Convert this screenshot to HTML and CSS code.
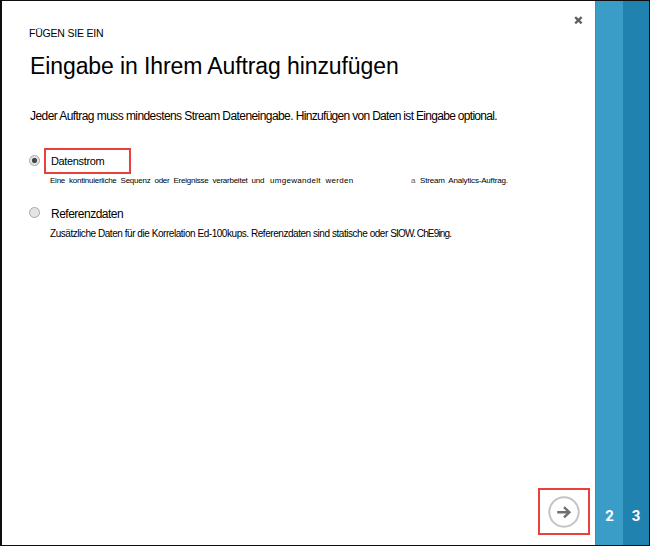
FILE: index.html
```html
<!DOCTYPE html>
<html lang="de">
<head>
<meta charset="utf-8">
<title>Eingabe hinzufügen</title>
<link rel="stylesheet" href="styles.css">
</head>
<body>
<div class="dialog">
  <main class="content">
    <button class="close" aria-label="Schließen"><svg width="9" height="9" viewBox="0 0 9 9"><path d="M1.2 1.2 7.6 7.4M7.6 1.2 1.2 7.4"/></svg></button>
    <p class="eyebrow">FÜGEN SIE EIN</p>
    <h1 class="title">Eingabe in Ihrem Auftrag hinzufügen</h1>
    <p class="intro">Jeder Auftrag muss mindestens Stream Dateneingabe. <span class="intro-end">Hinzufügen von Daten ist Eingabe optional.</span></p>
    <div class="option">
      <span class="radio checked"></span>
      <div class="option-text">
        <div class="label framed">Datenstrom</div>
        <p class="hint hint-small"><span class="lead">Eine kontinuierliche Sequenz oder Ereignisse verarbeitet und</span><span class="wide">umgewandelt werden</span><span class="letter">a</span><span class="tail">Stream Analytics-Auftrag.</span></p>
      </div>
    </div>
    <div class="option second">
      <span class="radio"></span>
      <div class="option-text">
        <div class="label large">Referenzdaten</div>
        <p class="hint"><span>Zusätzliche Daten für die Korrelation Ed-100kups. Referenzdaten sind statische oder</span> <span class="tight">SIOW. ChE9ing.</span></p>
      </div>
    </div>
    <button class="next" aria-label="Weiter"><svg width="32" height="32" viewBox="0 0 32 32"><circle cx="16" cy="16" r="14.7"/><path d="M9.2 16.3H21.4M16 11.2l5.4 5.1-5.4 5.1"/></svg></button>
  </main>
  <aside class="step step-two">2</aside>
  <aside class="step step-three">3</aside>
</div>
</body>
</html>
```
FILE: styles.css
```css
* { box-sizing: border-box; }
body { margin: 0; font-family: "Liberation Sans", Arial, sans-serif; color: #000; }
p, h1 { margin: 0; font-weight: 400; white-space: nowrap; }
button { padding: 0; background: none; border: 0; display: block; }
svg { display: block; fill: none; }
.dialog { display: flex; width: 650px; height: 546px; border: 1px solid #100c10; border-left-width: 2px; background: #fff; }
.content { position: relative; flex: 1; padding: 26px 0 0 27px; }
.close { position: absolute; top: 15px; right: 12.5px; }
.close path { stroke: #606060; stroke-width: 2.3; }
.eyebrow { font-size: 10.5px; line-height: 12px; letter-spacing: -0.2px; }
.title { margin: 13px 0 0 1px; font-size: 23px; line-height: 28px; letter-spacing: -0.1px; }
.intro { margin: 29px 0 0 1px; font-size: 12px; line-height: 14px; letter-spacing: -0.57px; }
.intro-end { letter-spacing: -0.69px; }
.option { display: flex; margin-top: 25px; }
.radio { width: 11px; height: 11px; margin: 7px 4px 0 0; border: 1px solid #a8a8a8; border-radius: 50%; background: #e4e4e4; flex: none; }
.second .radio { margin-top: 6px; }
.checked { background: radial-gradient(circle, #484848 0 2.2px, #e4e4e4 3px); }
.label { height: 26px; padding-left: 7px; font-size: 11px; line-height: 28px; }
.framed { width: 87px; padding-left: 5px; border: 2px solid #e8403a; line-height: 23px; letter-spacing: -0.35px; }
.large { font-size: 12px; line-height: 27px; letter-spacing: -0.5px; }
.hint { padding-left: 6px; font-size: 10px; line-height: 14px; letter-spacing: -0.45px; }
.hint-small { display: flex; font-size: 8px; line-height: 13px; letter-spacing: -0.22px; word-spacing: 2px; }
.lead { width: 220px; letter-spacing: -0.24px; }
.wide { width: 141px; letter-spacing: .3px; }
.letter { width: 9px; color: #705060; }
.tail { letter-spacing: -0.18px; }
.second { margin-top: 14px; }
.tight { letter-spacing: -0.85px; }
.next { position: absolute; right: 5px; bottom: 10px; width: 52px; height: 47px; border: 2px solid #e8403a; display: grid; place-items: center; }
.next circle { stroke: #c4c4c4; stroke-width: 2; }
.next path { stroke: #707070; stroke-width: 2.4; }
.step { display: flex; align-items: flex-end; justify-content: center; padding-bottom: 19px; font: 700 15px/20px Roboto, sans-serif; color: #fff; }
.step-two { width: 28px; background: #3a9dc8; border-left: 1px solid #2d91bc; }
.step-three { width: 26px; background: #1f82af; }
```
